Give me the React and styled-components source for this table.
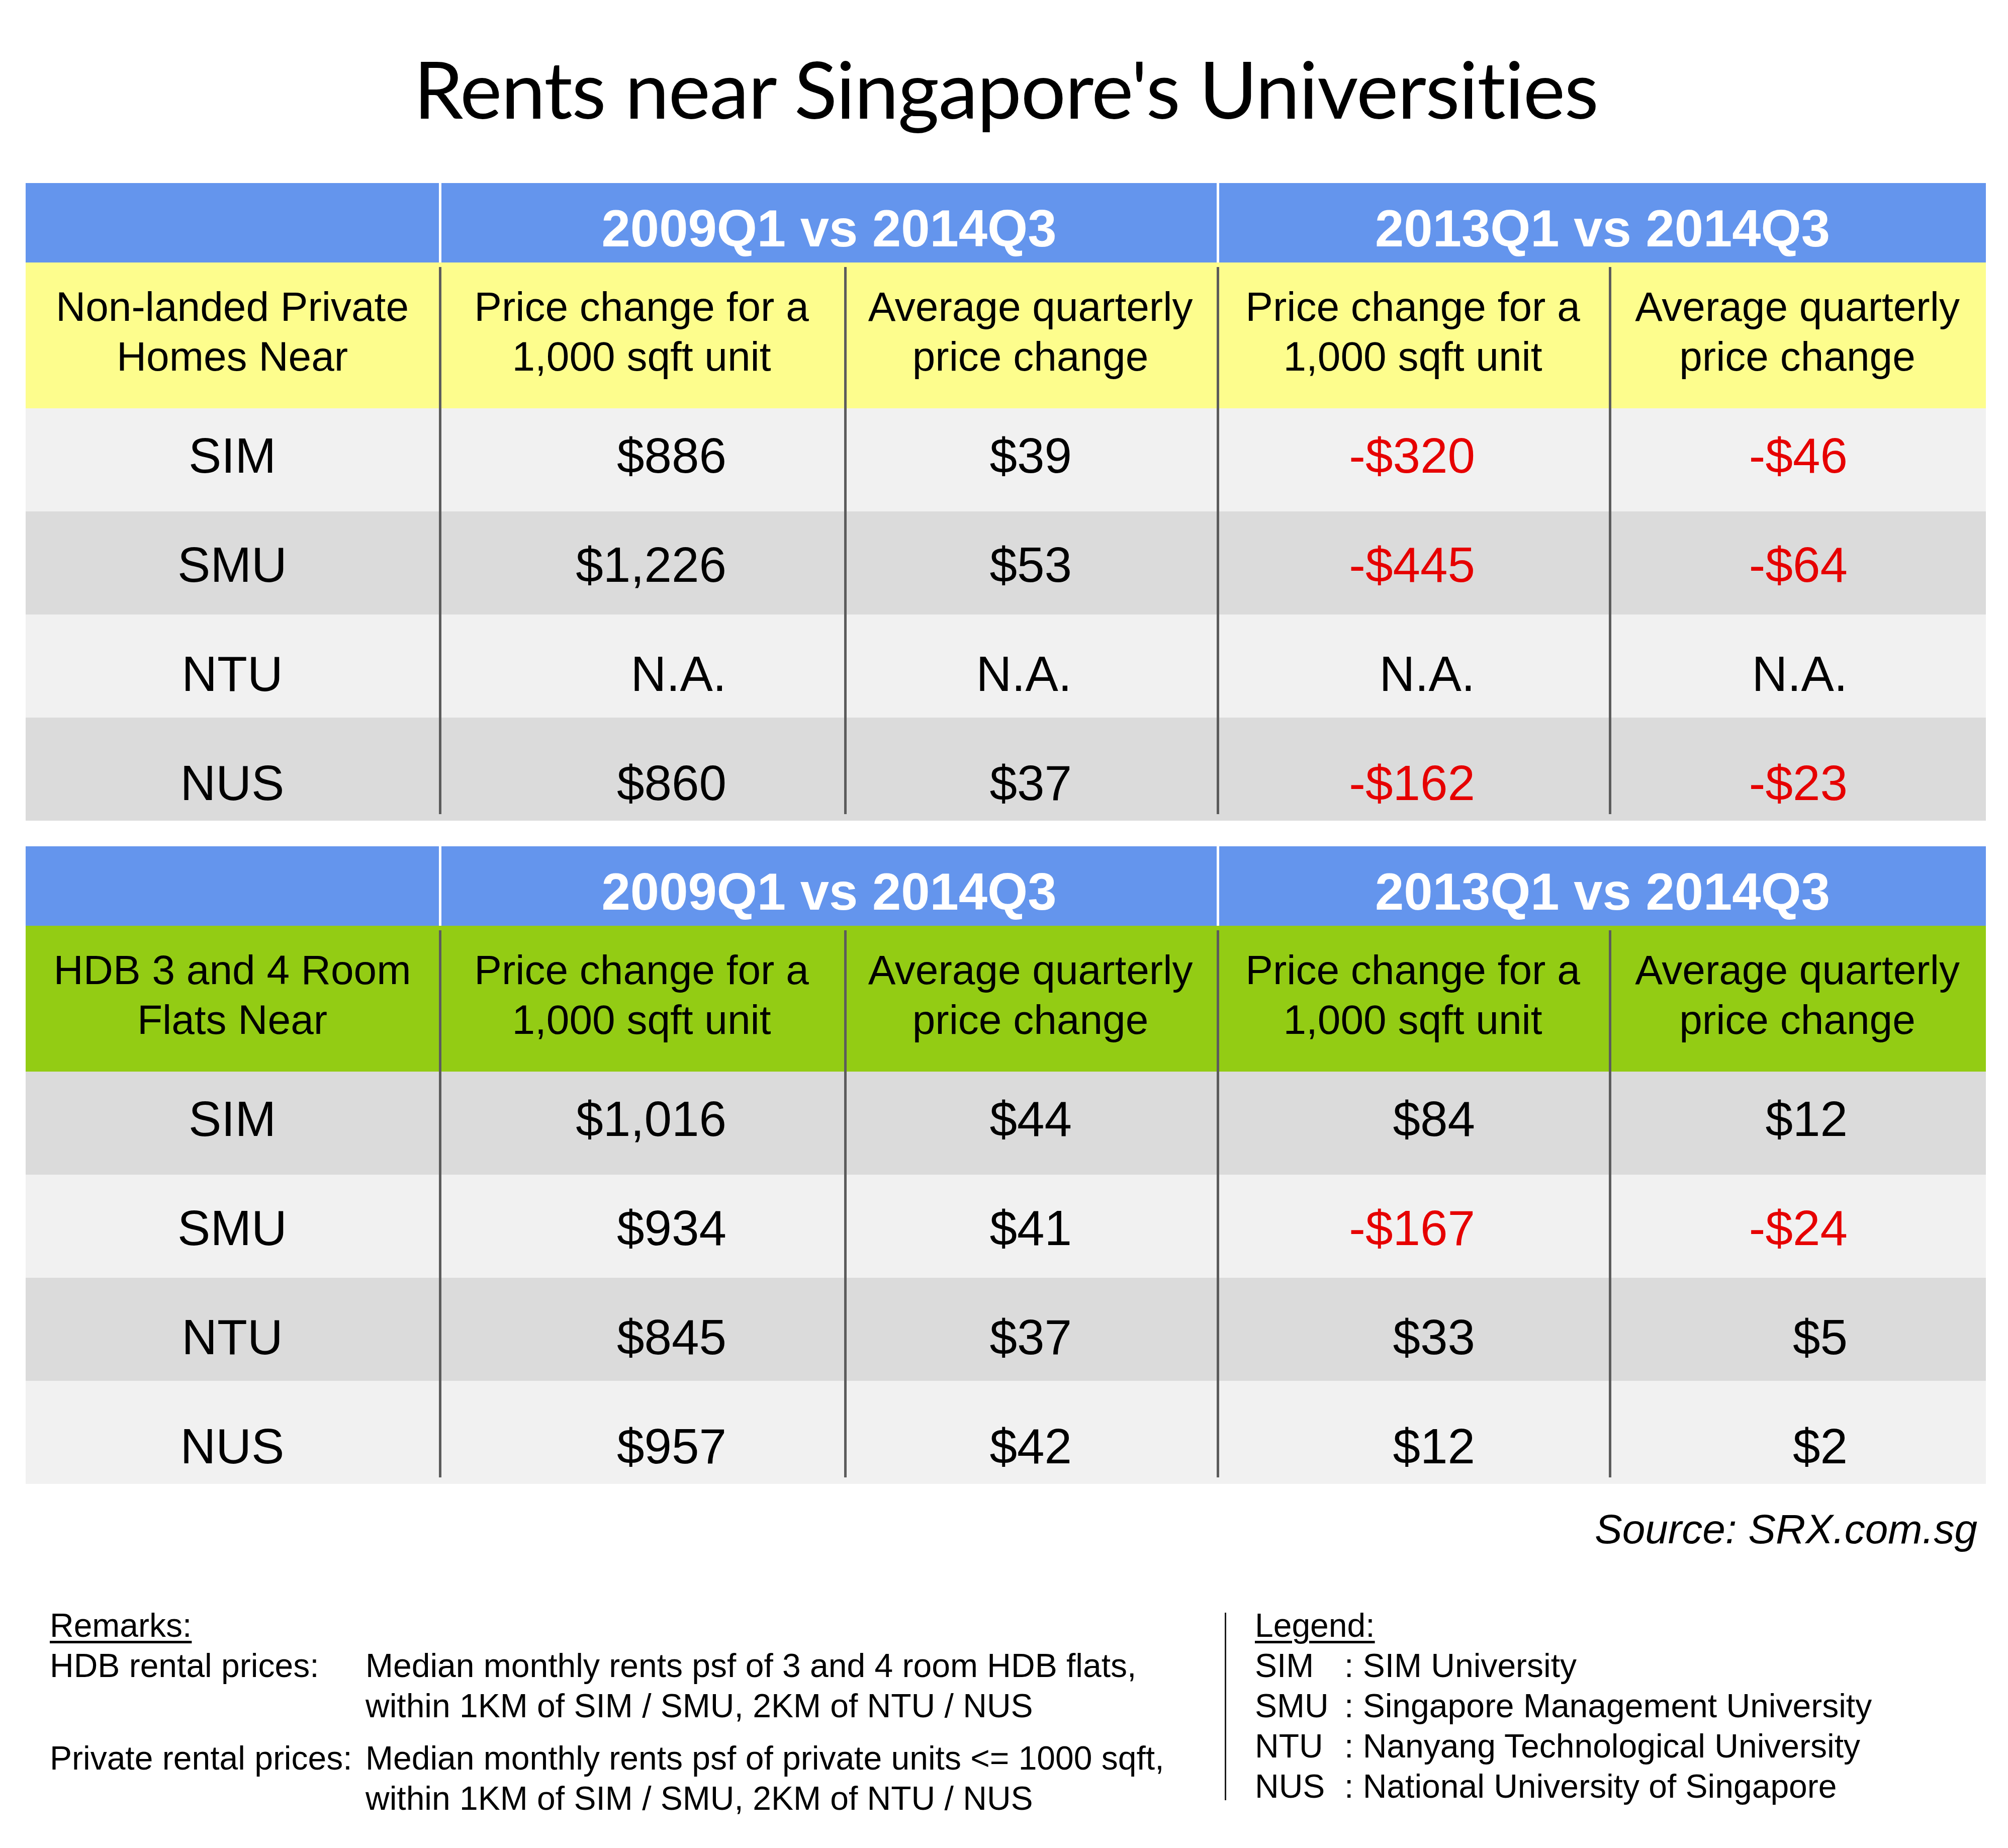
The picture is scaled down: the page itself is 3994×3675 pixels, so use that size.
import React from "react";
import styled, { createGlobalStyle } from "styled-components";

const Global = createGlobalStyle`
  html, body { margin: 0; padding: 0; background: #ffffff; }
  body { width: 3994px; font-family: "Liberation Sans", Arial, sans-serif; color: #000; }
`;

const COLS = "822px 806px 741px 780px 750px";
const DIVIDER = "#5c5c5c";

const Page = styled.div`
  width: 3994px;
  height: 3675px;
  box-sizing: border-box;
  padding: 0 44px 0 51px;
  background: #ffffff;
  overflow: hidden;
`;

const Title = styled.h1`
  margin: 0;
  padding-top: 80px;
  font-family: Lato, "Open Sans", sans-serif;
  font-weight: 400;
  font-size: 158px;
  line-height: 190px;
  letter-spacing: -1.6px;
  font-variant-ligatures: none;
  text-align: center;
  color: #000;
  white-space: nowrap;
`;

const Table = styled.section`
  margin-top: ${(p) => p.$gap}px;
  display: flex;
  flex-direction: column;
`;

const GroupRow = styled.div`
  display: grid;
  grid-template-columns: 822px 1547px 1530px;
  height: 158px;
  background: #6495ed;
`;

const GroupCell = styled.div`
  box-sizing: border-box;
  padding-top: 39px;
  border-left: ${(p) => (p.$first ? "none" : "5px solid #ffffff")};
  font-weight: 700;
  font-size: 103px;
  line-height: 103px;
  color: #ffffff;
  text-align: center;
  white-space: nowrap;
`;

const HeadRow = styled.div`
  display: grid;
  grid-template-columns: ${COLS};
  height: 290px;
  background: ${(p) => p.$bg};
`;

const HeadCell = styled.div`
  box-sizing: border-box;
  padding-top: 38px;
  font-size: 82px;
  line-height: 99px;
  text-align: center;
  white-space: nowrap;
  background: ${(p) =>
    p.$first
      ? "none"
      : `linear-gradient(${DIVIDER}, ${DIVIDER}) 0 9px / 5px calc(100% - 9px) no-repeat`};
`;

const DataRow = styled.div`
  display: grid;
  grid-template-columns: ${COLS};
  height: 205px;
  background: ${(p) => (p.$dark ? "#dbdbdb" : "#f1f1f1")};
`;

const DataCell = styled.div`
  box-sizing: border-box;
  padding-top: ${(p) => p.$top}px;
  padding-right: ${(p) => p.$pad || 0}px;
  font-size: 98px;
  line-height: 98px;
  white-space: nowrap;
  text-align: ${(p) => (p.$first ? "center" : "right")};
  color: ${(p) => (p.$neg ? "#e60000" : "#000")};
  background: ${(p) =>
    p.$first
      ? "none"
      : `linear-gradient(${DIVIDER}, ${DIVIDER}) 0 0 / 5px ${
          p.$last ? "calc(100% - 13px)" : "100%"
        } no-repeat`};
`;

const Source = styled.div`
  margin-top: 49px;
  padding-right: 17px;
  font-style: italic;
  font-size: 82px;
  line-height: 82px;
  text-align: right;
  white-space: nowrap;
`;

const Footer = styled.footer`
  margin-top: 110px;
  display: grid;
  grid-template-columns: 2385px 1fr;
  font-size: 66px;
  line-height: 80px;
`;

const Remarks = styled.div`
  padding-left: 48px;
`;

const Heading = styled.div`
  text-decoration: underline;
  text-decoration-thickness: 5px;
  text-underline-offset: 8px;
`;

const EntryList = styled.div`
  display: flex;
  flex-direction: column;
  gap: 24px;
`;

const Entry = styled.div`
  display: grid;
  grid-template-columns: 628px 1fr;
  white-space: nowrap;
`;

const Legend = styled.div`
  padding-left: 60px;
  background: linear-gradient(#1a1a1a, #1a1a1a) 0 15px / 3px 373px no-repeat;
`;

const LegendRow = styled.div`
  display: grid;
  grid-template-columns: 178px 1fr;
  white-space: nowrap;
`;

const PADS = [0, 234, 288, 266, 275];

const headers = [
  ["Price change for a", "1,000 sqft unit"],
  ["Average quarterly", "price change"],
  ["Price change for a", "1,000 sqft unit"],
  ["Average quarterly", "price change"],
];

const tables = [
  {
    gap: 94,
    color: "#fdfd8d",
    label: ["Non-landed Private", "Homes Near"],
    darkFirst: false,
    rows: [
      ["SIM", "$886", "$39", "-$320", "-$46"],
      ["SMU", "$1,226", "$53", "-$445", "-$64"],
      ["NTU", "N.A.", "N.A.", "N.A.", "N.A."],
      ["NUS", "$860", "$37", "-$162", "-$23"],
    ],
  },
  {
    gap: 51,
    color: "#93cc14",
    label: ["HDB 3 and 4 Room", "Flats Near"],
    darkFirst: true,
    rows: [
      ["SIM", "$1,016", "$44", "$84", "$12"],
      ["SMU", "$934", "$41", "-$167", "-$24"],
      ["NTU", "$845", "$37", "$33", "$5"],
      ["NUS", "$957", "$42", "$12", "$2"],
    ],
  },
];

function Lines({ lines }) {
  return lines.map((l, i) => <div key={i}>{l}</div>);
}

function PriceTable({ t }) {
  return (
    <Table $gap={t.gap}>
      <GroupRow>
        <GroupCell $first />
        <GroupCell>2009Q1 vs 2014Q3</GroupCell>
        <GroupCell>2013Q1 vs 2014Q3</GroupCell>
      </GroupRow>
      <HeadRow $bg={t.color}>
        <HeadCell $first>
          <Lines lines={t.label} />
        </HeadCell>
        {headers.map((h, i) => (
          <HeadCell key={i}>
            <Lines lines={h} />
          </HeadCell>
        ))}
      </HeadRow>
      {t.rows.map((r, ri) => (
        <DataRow key={ri} $dark={(ri % 2 === 0) === t.darkFirst}>
          {r.map((v, ci) => (
            <DataCell
              key={ci}
              $first={ci === 0}
              $last={ri === t.rows.length - 1}
              $top={45 + ri * 12}
              $pad={PADS[ci]}
              $neg={v.startsWith("-")}
            >
              {v}
            </DataCell>
          ))}
        </DataRow>
      ))}
    </Table>
  );
}

const legend = [
  ["SIM", ": SIM University"],
  ["SMU", ": Singapore Management University"],
  ["NTU", ": Nanyang Technological University"],
  ["NUS", ": National University of Singapore"],
];

export default function App() {
  return (
    <>
      <Global />
      <Page>
        <Title>Rents near Singapore's Universities</Title>
        {tables.map((t, i) => (
          <PriceTable key={i} t={t} />
        ))}
        <Source>Source: SRX.com.sg</Source>
        <Footer>
          <Remarks>
            <Heading>Remarks:</Heading>
            <EntryList>
              <Entry>
                <div>HDB rental prices:</div>
                <div>
                  <div>Median monthly rents psf of 3 and 4 room HDB flats,</div>
                  <div>within 1KM of SIM / SMU, 2KM of NTU / NUS</div>
                </div>
              </Entry>
              <Entry>
                <div>Private rental prices:</div>
                <div>
                  <div>Median monthly rents psf of private units &lt;= 1000 sqft,</div>
                  <div>within 1KM of SIM / SMU, 2KM of NTU / NUS</div>
                </div>
              </Entry>
            </EntryList>
          </Remarks>
          <Legend>
            <Heading>Legend:</Heading>
            {legend.map(([a, b]) => (
              <LegendRow key={a}>
                <div>{a}</div>
                <div>{b}</div>
              </LegendRow>
            ))}
          </Legend>
        </Footer>
      </Page>
    </>
  );
}
